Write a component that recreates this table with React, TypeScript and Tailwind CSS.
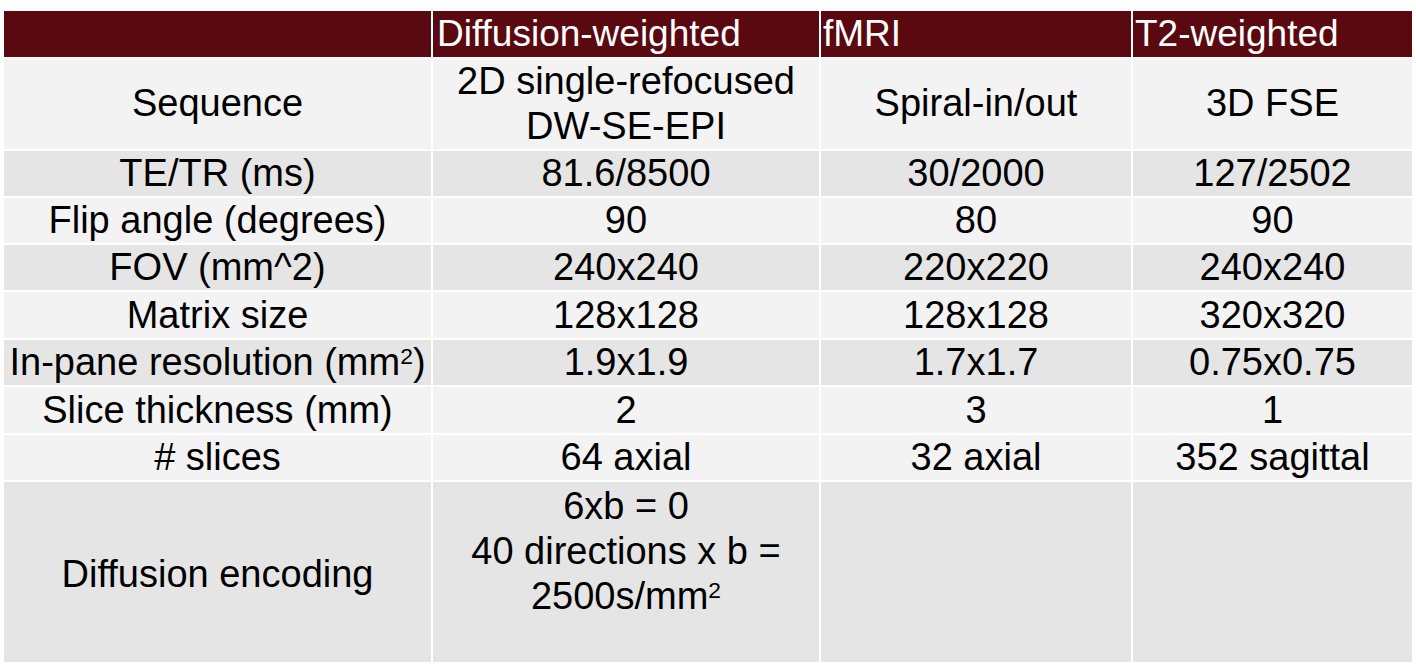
import React from 'react';

type Row = {
  label: React.ReactNode;
  cells: React.ReactNode[];
  h: string;
  dark?: boolean;
};

const Sq = () => <sup className="text-[0.6em]">2</sup>;

const rows: Row[] = [
  {
    label: 'Sequence',
    cells: [
      <>
        2D single-refocused
        <br />
        DW-SE-EPI
      </>,
      'Spiral-in/out',
      '3D FSE',
    ],
    h: 'h-[91px]',
  },
  { label: 'TE/TR (ms)', cells: ['81.6/8500', '30/2000', '127/2502'], h: 'h-[45px]', dark: true },
  { label: 'Flip angle (degrees)', cells: ['90', '80', '90'], h: 'h-[45px]' },
  { label: 'FOV (mm^2)', cells: ['240x240', '220x220', '240x240'], h: 'h-[45px]', dark: true },
  { label: 'Matrix size', cells: ['128x128', '128x128', '320x320'], h: 'h-[46px]' },
  {
    label: (
      <>
        In-pane resolution (mm<Sq />)
      </>
    ),
    cells: ['1.9x1.9', '1.7x1.7', '0.75x0.75'],
    h: 'h-[45px]',
    dark: true,
  },
  { label: 'Slice thickness (mm)', cells: ['2', '3', '1'], h: 'h-[46px]' },
  { label: '# slices', cells: ['64 axial', '32 axial', '352 sagittal'], h: 'h-[45px]' },
];

const cols = 'grid grid-cols-[427px_386px_310px_279px] gap-x-[2px]';

export default function App() {
  return (
    <div className="w-[1416px] h-[666px] bg-white pt-[11px] pl-[4px] text-black font-['Liberation_Sans',Arial,sans-serif]">
      <div className={`${cols} h-[46px] text-white text-[37px] leading-[46px]`}>
        <div className="bg-[#5a0910]" />
        <div className="bg-[#5a0910] pl-[4px] whitespace-nowrap">Diffusion-weighted</div>
        <div className="bg-[#5a0910] pl-[2px]">fMRI</div>
        <div className="bg-[#5a0910] pl-[2px]">T2-weighted</div>
      </div>
      <div className="flex flex-col gap-y-[2px] mt-[1px] text-[38px] leading-[45px]">
        {rows.map((r, i) => (
          <div key={i} className={`${cols} ${r.h}`}>
            <div
              className={`${r.dark ? 'bg-[#e5e5e5]' : 'bg-[#f3f3f3]'} flex items-center justify-center text-center whitespace-nowrap`}>
              <div>{r.label}</div>
            </div>
            {r.cells.map((c, j) => (
              <div
                key={j}
                className={`${r.dark ? 'bg-[#e5e5e5]' : 'bg-[#f3f3f3]'} flex items-center justify-center text-center whitespace-nowrap`}>
                <div>{c}</div>
              </div>
            ))}
          </div>
        ))}
        <div className={`${cols} h-[180px]`}>
          <div className="bg-[#e5e5e5] flex items-center justify-center pt-[4px]">Diffusion encoding</div>
          <div className="bg-[#e5e5e5] text-center pt-[2px] whitespace-nowrap">
            6xb = 0
            <br />
            40 directions x b =
            <br />
            2500s/mm<Sq />
          </div>
          <div className="bg-[#e5e5e5]" />
          <div className="bg-[#e5e5e5]" />
        </div>
      </div>
    </div>
  );
}
